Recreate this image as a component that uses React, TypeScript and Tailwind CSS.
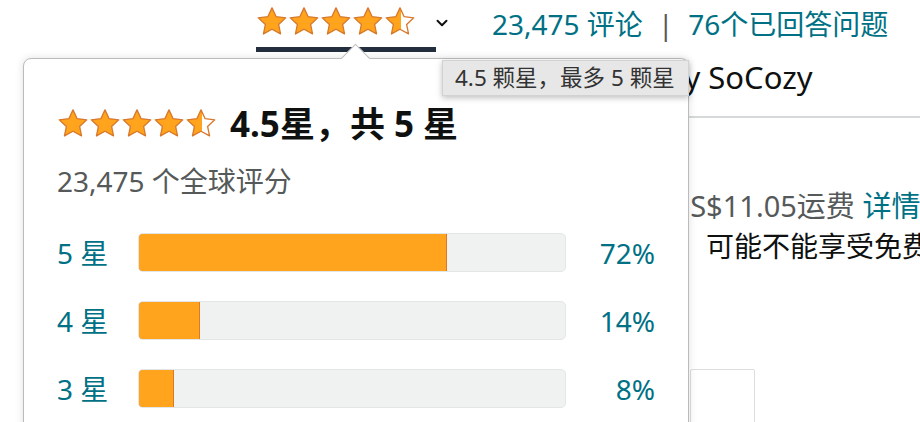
import { ChevronDown } from 'lucide-react';

const TEAL = 'text-[#007185]';

// 5-point star, viewBox 0 0 24 24
const STAR = 'M12 1.4l3.1 6.6 7.2.85-5.35 4.95 1.45 7.15L12 17.45l-6.4 3.5 1.45-7.15L1.7 8.85l7.2-.85z';

function Star({ fill, size, id }: { fill: 'full' | 'half'; size: number; id: string }) {
  return (
    <svg width={size} height={size} viewBox="0 0 24 24" className="shrink-0">
      <defs>
        <linearGradient id={id} x1="0" x2="1" y1="0" y2="0">
          <stop offset="0" stopColor="#ffa41c" />
          <stop offset={fill === 'half' ? '0.52' : '1'} stopColor="#ffa41c" />
          <stop offset={fill === 'half' ? '0.52' : '1'} stopColor="#ffffff" />
          <stop offset="1" stopColor="#ffffff" />
        </linearGradient>
      </defs>
      <path d={STAR} fill={`url(#${id})`} stroke="#d9782b" strokeWidth="1" strokeLinejoin="round" />
    </svg>
  );
}

function Stars({ size, prefix }: { size: number; prefix: string }) {
  return (
    <div className="flex items-center">
      {[0, 1, 2, 3].map((i) => (
        <Star key={i} fill="full" size={size} id={`${prefix}-${i}`} />
      ))}
      <Star fill="half" size={size} id={`${prefix}-h`} />
    </div>
  );
}

const rows = [
  { label: '5 星', pct: 72 },
  { label: '4 星', pct: 14 },
  { label: '3 星', pct: 8 },
];

export default function App() {
  return (
    <div className="relative w-[920px] h-[422px] overflow-hidden bg-white font-['Noto_Sans','Noto_Sans_CJK_SC',sans-serif] text-[#0f1111]">
      {/* header strip */}
      <div className="flex items-start pl-[256px] h-[58px]">
        <div className="flex flex-col w-[180px] pt-[6px]">
          <Stars size={32} prefix="top" />
          <div className="mt-[9px] h-[5px] bg-[#232f3e]" />
        </div>
        <ChevronDown size={18} strokeWidth={2.6} className="mt-[14px] -ml-[3px] text-[#0f1111]" />
        <div className="ml-[41px] mt-[4px] flex items-center text-[28px] leading-[40px]">
          <span className={TEAL}>23,475 评论</span>
          <span className="mx-[15px] text-[#565959]">|</span>
          <span className={TEAL}>76个已回答问题</span>
        </div>
      </div>

      {/* page content behind the popover */}
      <div className="pl-[666px]">
        <div className="h-[58px] text-[31px] leading-[38px]">by SoCozy</div>
        <div className="border-t-2 border-[#d5d9d9]" />
        <div className="mt-[68px] pl-[3px] text-[29px] leading-[40px] whitespace-nowrap text-[#565959]">
          US$11.05运费 <span className={TEAL}>详情</span>
        </div>
        <div className="pl-[40px] text-[28px] leading-[40px] whitespace-nowrap">可能不能享受免费</div>
        <div className="mt-[103px] ml-[24px] w-[65px] h-[60px] border border-[#ddd] rounded-[2px]" />
      </div>

      {/* ratings popover */}
      <div className="absolute left-[23px] top-[58px] w-[666px] h-[420px] rounded-[8px] border border-[#bbbbbb] bg-white shadow-[0_0_8px_rgba(0,0,0,0.12)]">
        <div className="pl-[33px] pr-[33px] pt-[45px]">
          <div className="flex items-center">
            <Stars size={32} prefix="pop" />
            <span className="ml-[13px] text-[35px] font-bold leading-[40px]">4.5星，共 5 星</span>
          </div>
          <div className="mt-[18px] text-[28px] leading-[38px] text-[#565959]">23,475 个全球评分</div>
          <div className="mt-[33px] flex flex-col gap-[29px]">
            {rows.map((r) => (
              <div key={r.label} className="flex items-center h-[39px]">
                <span className={`w-[81px] text-[28px] ${TEAL}`}>{r.label}</span>
                <div className="relative w-[428px] h-[39px] rounded-[5px] bg-[#f0f2f2] border border-[#e3e6e6] overflow-hidden">
                  <div
                    className="h-full bg-[#ffa41c] border border-[#de7921] rounded-l-[5px] -m-px box-content"
                    style={{ width: `${r.pct}%` }}
                  />
                </div>
                <span className={`w-[89px] text-right text-[28px] ${TEAL}`}>{r.pct}%</span>
              </div>
            ))}
          </div>
        </div>
      </div>

      {/* popover arrow */}
      <div className="absolute left-[345px] top-[48px] w-[21px] h-[21px] rotate-45 bg-white border-l border-t border-[#bbbbbb]" />

      {/* tooltip */}
      <div className="absolute left-[442px] top-[60px] w-[247px] h-[36px] flex items-center pl-[12px] bg-[#e7e7e7] border border-[#d2d2d2] shadow-[0_2px_6px_rgba(0,0,0,0.25)] text-[22.5px] text-[#333] whitespace-nowrap">
        4.5 颗星，最多 5 颗星
      </div>
    </div>
  );
}
